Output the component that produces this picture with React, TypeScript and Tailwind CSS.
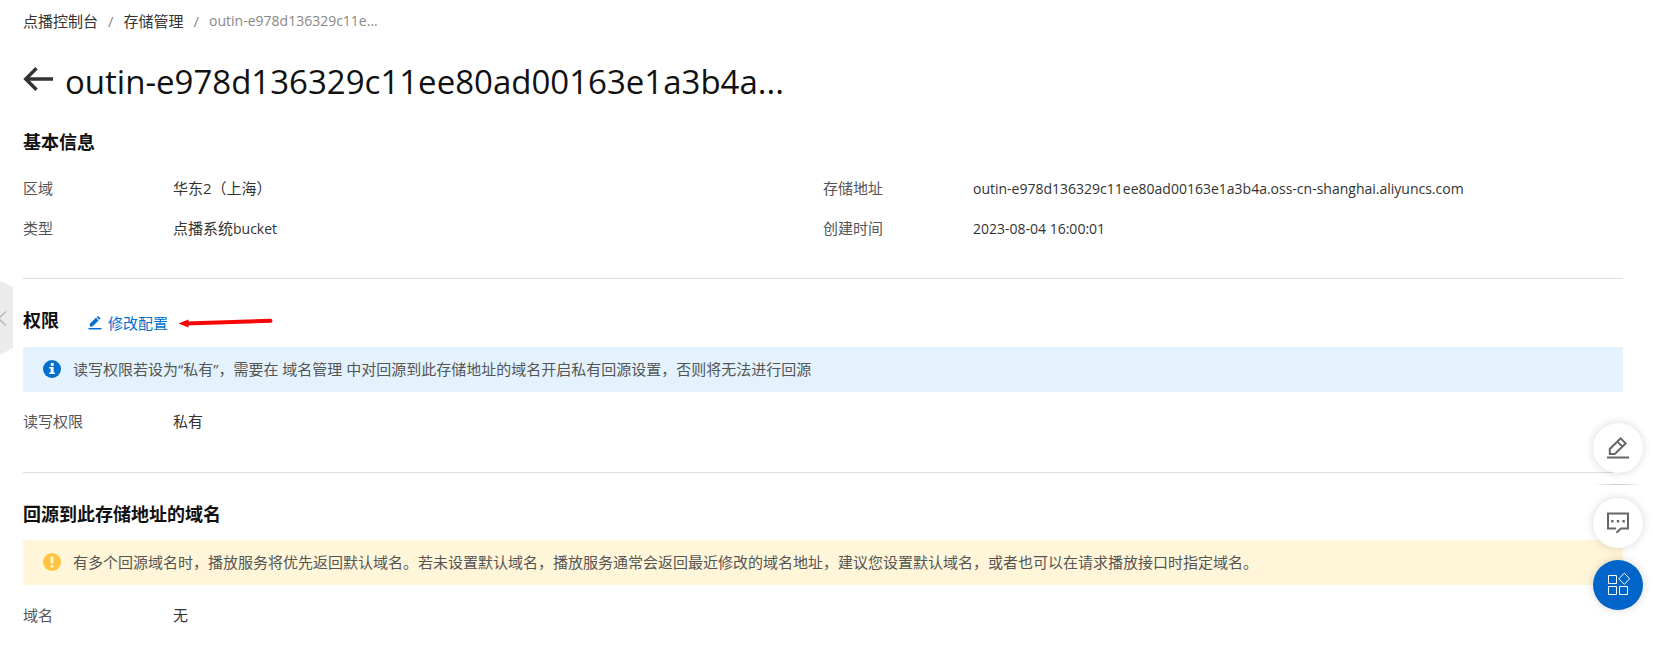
import type { ReactNode } from "react"

function Field({ label, children }: { label: string; children: ReactNode }) {
  return (
    <div className="flex h-10 items-center">
      <dt className="w-[150px] shrink-0 text-[#555]">{label}</dt>
      <dd className="text-[#333]">{children}</dd>
    </div>
  )
}

function Latin({ children }: { children: ReactNode }) {
  return <span className="text-[14px]">{children}</span>
}

function InfoIcon() {
  return (
    <svg width="18" height="18" viewBox="0 0 18 18" className="shrink-0">
      <circle cx="9" cy="9" r="9" fill="#0070cc" />
      <circle cx="9.3" cy="4.4" r="1.7" fill="#fff" />
      <path d="M6.2 7h4.4v5.6h1.4v1.5H6.2v-1.5h1.5V8.5H6.2z" fill="#fff" />
    </svg>
  )
}

function WarningIcon() {
  return (
    <svg width="18" height="18" viewBox="0 0 18 18" className="shrink-0">
      <circle cx="9" cy="9" r="9" fill="#ffc440" />
      <path d="M7.6 3.6h2.8v6.8H7.6zM7.6 12h2.8v2.6H7.6z" fill="#fff6d9" />
    </svg>
  )
}

export default function App() {
  return (
    <div className="relative min-h-screen bg-white pb-4 pl-[23px] pr-[30px] font-['Open_Sans','Noto_Sans_CJK_SC',sans-serif] text-[15px] leading-6 text-[#333]">
      {/* Breadcrumb */}
      <nav aria-label="breadcrumb" className="flex items-center pt-[9px]">
        <a href="#console">点播控制台</a>
        <span className="px-[10px] text-[#888]">/</span>
        <a href="#storage">存储管理</a>
        <span className="px-[10px] text-[#888]">/</span>
        <span className="text-[14px] text-[#888]">outin-e978d136329c11e...</span>
      </nav>

      {/* Title */}
      <header className="mt-[25px] flex h-12 items-center gap-3">
        <button type="button" aria-label="返回" className="mb-[6px] cursor-pointer">
          <svg width="30" height="24" viewBox="0 0 30 24" fill="none" stroke="#333" strokeWidth="3.4">
            <path d="M2.5 12H30M13.5 1.2L2.7 12l10.8 10.8" />
          </svg>
        </button>
        <h1 className="text-[33px] leading-[48px] text-[#111]">
          outin-e978d136329c11ee80ad00163e1a3b4a...
        </h1>
      </header>

      {/* Basic info */}
      <section className="border-b border-[#dedede] pb-[30px] pt-6">
        <h2 className="text-[18px] font-bold leading-6 text-[#111]">基本信息</h2>
        <dl className="mt-[14px] grid grid-cols-2">
          <Field label="区域">华东2（上海）</Field>
          <Field label="存储地址">
            <Latin>outin-e978d136329c11ee80ad00163e1a3b4a.oss-cn-shanghai.aliyuncs.com</Latin>
          </Field>
          <Field label="类型">
            点播系统<Latin>bucket</Latin>
          </Field>
          <Field label="创建时间">
            <Latin>2023-08-04 16:00:01</Latin>
          </Field>
        </dl>
      </section>

      {/* Permission */}
      <section className="border-b border-[#dedede] pb-[31px] pt-[26px]">
        <div className="flex items-center">
          <h2 className="text-[18px] font-bold leading-6 text-[#111]">权限</h2>
          <button type="button" className="ml-[29px] mt-[6px] flex cursor-pointer items-center gap-[6px] text-[#0070cc]">
            <svg width="14" height="14" viewBox="0 0 14 14" fill="#0070cc">
              <path d="M0.5 12h13v1.6H0.5zM1.8 7.8L8 1.8l2.6 2.6L4.4 10.6H1.8zM8.7 1.2L10 0l2.6 2.5-1.3 1.2z" />
            </svg>
            修改配置
          </button>
          <svg width="96" height="12" viewBox="0 0 96 12" className="ml-[10px] mt-[6px]">
            <path d="M8 6.5L92.5 3.8" stroke="#f60606" strokeWidth="4" strokeLinecap="round" />
            <path d="M0.5 6.5L10.5 2.5V10.5z" fill="#f60606" />
          </svg>
        </div>
        <div role="note" className="mt-3 flex h-[45px] items-center gap-3 bg-[#e3f2fd] pb-[2px] pl-5 text-[#555]">
          <InfoIcon />
          <p>读写权限若设为“私有”，需要在 域名管理 中对回源到此存储地址的域名开启私有回源设置，否则将无法进行回源</p>
        </div>
        <dl className="mt-[9px]">
          <Field label="读写权限">私有</Field>
        </dl>
      </section>

      {/* Origin domains */}
      <section className="pt-[29px]">
        <h2 className="text-[18px] font-bold leading-6 text-[#111]">回源到此存储地址的域名</h2>
        <div role="note" className="mt-[14px] flex h-[45px] items-center gap-3 bg-[#fff6d9] pb-[2px] pl-5 text-[#555]">
          <WarningIcon />
          <p>
            有多个回源域名时，播放服务将优先返回默认域名。若未设置默认域名，播放服务通常会返回最近修改的域名地址，建议您设置默认域名，或者也可以在请求播放接口时指定域名。
          </p>
        </div>
        <dl className="mt-[10px]">
          <Field label="域名">无</Field>
        </dl>
      </section>

      {/* Sidebar handle */}
      <button type="button" aria-label="展开菜单" className="absolute left-0 top-[281px] cursor-pointer">
        <svg width="13" height="74" viewBox="0 0 13 74" fill="none">
          <path d="M0 0L13 6V67L0 74z" fill="#ebebeb" />
          <path d="M6 30.5L-1.5 37.5L6 44.5" stroke="#bbb" strokeWidth="1.6" />
        </svg>
      </button>

      {/* Floating tools */}
      <div className="fixed bottom-[42px] right-[10px] flex w-[50px] flex-col items-center">
        <button type="button" aria-label="编辑" className="flex size-[50px] cursor-pointer items-center justify-center rounded-full bg-white shadow-[0_0_10px_rgba(0,0,0,0.16)]">
          <svg width="22" height="22" viewBox="0 0 22 22" fill="none" stroke="#666" strokeWidth="2">
            <path d="M0 20.4h22M2.8 17V12L13.6 1.4l5 5L7.8 17zM10.4 4.6l5 5" />
          </svg>
        </button>
        <div className="mb-[13px] mt-[11px] h-px w-full bg-linear-to-r from-transparent via-[#c4c6cf] to-transparent" />
        <button type="button" aria-label="反馈" className="flex size-[50px] cursor-pointer items-center justify-center rounded-full bg-white shadow-[0_0_10px_rgba(0,0,0,0.16)]">
          <svg width="22" height="22" viewBox="0 0 22 22" fill="none" stroke="#666" strokeWidth="2">
            <path d="M9 16.6H1V1.4h20v15.2h-7l-4.6 4.2" />
            <path d="M4.2 8h2.4v2.4H4.2zM9.8 8h2.4v2.4H9.8zM15.4 8h2.4v2.4h-2.4z" fill="#666" stroke="none" />
          </svg>
        </button>
        <button type="button" aria-label="更多服务" className="mt-3 flex size-[50px] cursor-pointer items-center justify-center rounded-full bg-[#0064c8] shadow-[0_0_10px_rgba(0,0,0,0.16)]">
          <svg width="24" height="24" viewBox="0 0 24 24" fill="none" stroke="#fff">
            <path d="M2.5 2.5h8v8h-8zM2.5 13.5h8v8h-8zM13.500 13.5h8v8h-8zM18.3 0.2l5.300 5.600-5.300 5.600-5.500-5.600z" />
          </svg>
        </button>
      </div>
    </div>
  )
}
